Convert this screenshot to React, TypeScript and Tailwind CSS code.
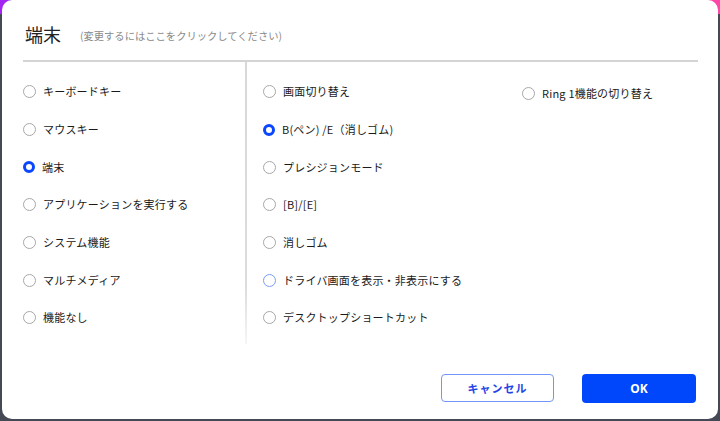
import React from "react";

const font = { fontFamily: '"Noto Sans CJK JP", "Noto Sans", sans-serif' };

type Item = { label: string; state?: "on" | "hover" };

function Radio({ state }: { state?: "on" | "hover" }) {
  if (state === "on") {
    return <span className="box-border block w-[12px] h-[12px] rounded-full border-[3.5px] border-[#0a46ff] bg-white shrink-0" />;
  }
  if (state === "hover") {
    return <span className="box-border block w-[13px] h-[13px] rounded-full border-[1.5px] border-[#7d9bf7] bg-white shrink-0" />;
  }
  return <span className="box-border block w-[13px] h-[13px] rounded-full border-[1.5px] border-[#a8a8a8] bg-white shrink-0" />;
}

function Row({ item }: { item: Item }) {
  return (
    <div className="flex items-center h-[37.7px] gap-[7px]">
      <Radio state={item.state} />
      <span className="text-[11px] leading-none text-[#1a1a1a] tracking-[0.2px]">{item.label}</span>
    </div>
  );
}

const left: Item[] = [
  { label: "キーボードキー" },
  { label: "マウスキー" },
  { label: "端末", state: "on" },
  { label: "アプリケーションを実行する" },
  { label: "システム機能" },
  { label: "マルチメディア" },
  { label: "機能なし" },
];

const mid: Item[] = [
  { label: "画面切り替え" },
  { label: "B(ペン) /E（消しゴム)", state: "on" },
  { label: "プレシジョンモード" },
  { label: "[B]/[E]" },
  { label: "消しゴム" },
  { label: "ドライバ画面を表示・非表示にする", state: "hover" },
  { label: "デスクトップショートカット" },
];

export default function App() {
  return (
    <div className="relative w-[720px] h-[421px] bg-[#444955] overflow-hidden" style={font}>
      <div className="absolute left-0 top-0 w-[14px] h-[14px] bg-[#a424f2]" />
      <div className="absolute right-0 top-0 w-[14px] h-[14px] bg-[#ff46a8]" />
      <div className="relative ml-[2px] mr-[2px] h-[419px] bg-white rounded-[10px] px-[21px] flex flex-col">
        <div className="flex items-end h-[45px] pb-[1px] gap-[19px] pl-[2px]">
          <span className="text-[18px] leading-none text-[#222] mb-[1px]">端末</span>
          <span className="text-[10.3px] leading-none text-[#8a8a8a] mb-[3px]">(変更するにはここをクリックしてください)</span>
        </div>
        <div className="mt-[15px] h-[2px] bg-[#d4d4d4] mr-[-1px]" />
        <div className="flex h-[282px]">
          <div className="w-[222px] pt-[11px]">
            {left.map((it) => (
              <Row key={it.label} item={it} />
            ))}
          </div>
          <div className="w-[2px] bg-gradient-to-b from-[#d8d8d8] via-[#dcdcdc] via-80% to-[#f6f6f6]" />
          <div className="w-[275px] pl-[16px] pt-[11px]">
            {mid.map((it) => (
              <Row key={it.label} item={it} />
            ))}
          </div>
          <div className="pt-[13px]">
            <div className="flex items-center h-[37.7px] gap-[7px]">
              <Radio />
              <span className="text-[11px] leading-none text-[#1a1a1a] tracking-[0.2px]">Ring 1機能の切り替え</span>
            </div>
          </div>
        </div>
        <div className="flex justify-end gap-[28px] mt-[30px] mr-[1px]">
          <button className="w-[113px] h-[28px] rounded-[4px] border-[1.5px] border-[#7396f6] bg-white text-[11px] font-bold text-[#1f45e6] tracking-[1px]">
            キャンセル
          </button>
          <button className="w-[114px] h-[29px] rounded-[4px] bg-[#0047fb] text-[12px] font-bold text-white" style={{ fontFamily: '"Noto Sans", sans-serif' }}>
            OK
          </button>
        </div>
      </div>
    </div>
  );
}
